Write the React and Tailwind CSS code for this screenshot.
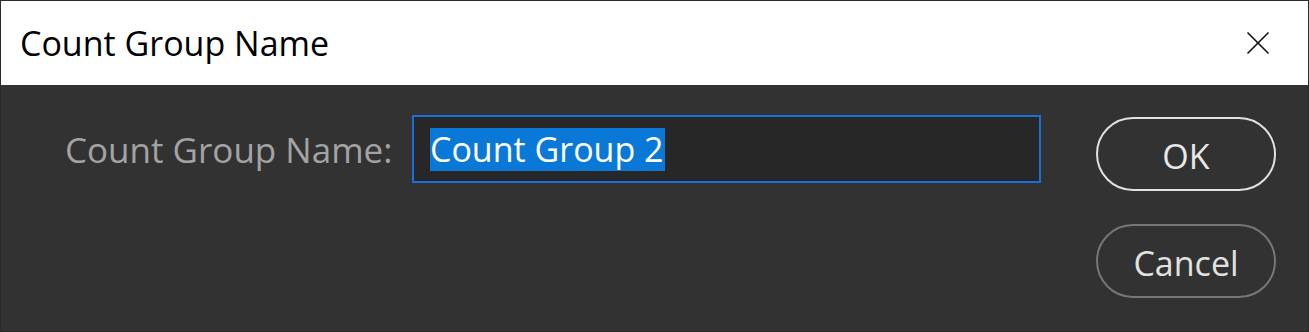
import { X } from 'lucide-react'

const FONT = { fontFamily: '"Open Sans", "Noto Sans", sans-serif' }

export default function App() {
  return (
    <div className="w-[1309px] h-[332px] flex flex-col border border-[#2b2b2b] bg-[#323232]" style={FONT}>
      {/* title bar */}
      <div className="h-[84px] bg-white flex items-center justify-between pl-[19px] pr-[30px]">
        <span className="text-[34px] text-black leading-none">Count Group Name</span>
        <X className="w-[40px] h-[40px] text-[#111111]" strokeWidth={1} />
      </div>

      {/* body */}
      <div className="flex-1 flex items-start pt-[30px] pl-[64px]">
        <div className="flex items-center gap-[24px]">
          <label className="w-[323px] whitespace-nowrap text-[35px] text-[#a3a3a3] leading-none">Count Group Name:</label>
          <div className="w-[629px] h-[68px] border-2 border-[#1a6fd8] bg-[#272727] flex items-center pl-[16px]">
            <span className="text-[34px] text-white bg-[#0a78d7] leading-[43px] pr-[1px]">Count Group 2</span>
          </div>
        </div>
        <div className="ml-[55px] mt-[2px] flex flex-col gap-[33px]">
          <button className="w-[180px] h-[74px] pt-[5px] rounded-full border-2 border-[#e2e2e2] text-[34px] text-[#e8e8e8]">OK</button>
          <button className="w-[180px] h-[74px] pt-[5px] rounded-full border-2 border-[#777777] text-[34px] text-[#e2e2e2]">Cancel</button>
        </div>
      </div>
    </div>
  )
}
